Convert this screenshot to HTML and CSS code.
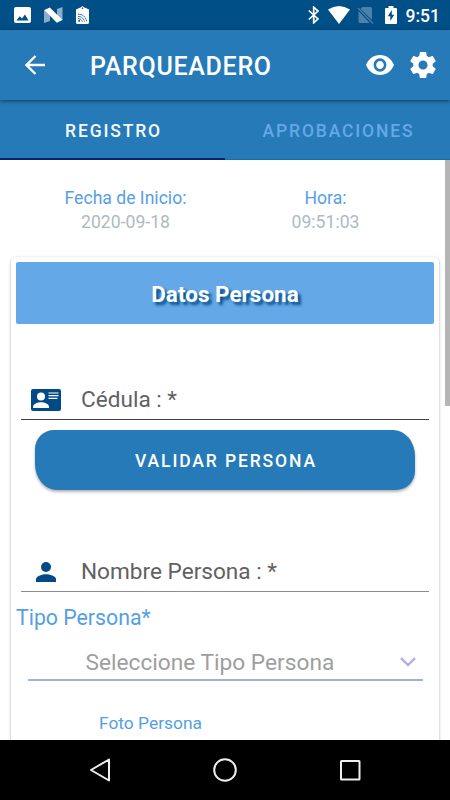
FILE: index.html
```html
<!DOCTYPE html>
<html lang="es">
<head>
<meta charset="utf-8">
<title>Parqueadero</title>
<link rel="stylesheet" href="styles.css">
</head>
<body>
<div class="screen">
  <div class="status">
    <div class="status-left">
      <svg width="17" height="17" viewBox="0 0 17 17"><rect width="17" height="16" rx="2" fill="#fff"/><path d="M2.5 13.5 5.7 9.2 8 11.6 11 7.5 14.5 13.5Z" fill="#004f87"/></svg>
      <svg width="19" height="16" viewBox="0 0 19 16"><path d="M0 3 6 5V14L0 16ZM13 2 18.500 0V13L13 11Z" fill="#fff" opacity=".55"/><path d="M0.300 3 5.800 0.500 18.500 13 12.800 15.700Z" fill="#fff"/></svg>
      <svg width="13" height="18" viewBox="0 0 13 18"><path d="M0 4Q0 3 1 3L5 1.200Q6.500-.8 8 1.200L12 3Q13 3 13 4V16.500Q13 18 11.500 18H1.500Q0 18 0 16.500Z" fill="#fff"/><circle cx="6.500" cy="2.300" r=".8" fill="#004f87"/><g fill="none" stroke="#004f87" stroke-width="1" stroke-dasharray="1.500 .6"><path d="M2 8.200Q9 8 10.700 15.500M2 10.400Q7 10.400 8.500 15.500M2 12.500Q5.400 12.600 6.300 15.500"/></g><circle cx="3.200" cy="14.700" r="1" fill="#004f87"/></svg>
    </div>
    <div class="status-right">
      <svg width="11" height="18" viewBox="0 0 11 18"><path d="M.8 4.500 10 13 5.700 16.800V1.200L10 5 .8 13.500" fill="none" stroke="#fff" stroke-width="1.700"/></svg>
      <svg class="wifi" width="22" height="18" viewBox="0 0 22 18"><path d="M0 3.500Q11-3.500 22 3.500L11 18Z" fill="#fff"/></svg>
      <svg class="sim" width="17" height="18" viewBox="0 0 17 18"><path d="M5.500 1H13.500Q15 1 15 2.500V14L3.500 2.800ZM1.500 5 12.800 17H3Q1.500 17 1.500 15.500Z" fill="#4b81ab"/><path d="M1 2 16 17.500" stroke="#4b81ab" stroke-width="1.200"/></svg>
      <svg class="battery" width="12" height="18" viewBox="0 0 12 18"><path d="M1 2H3.500V0H8.500V2H11Q12 2 12 3V17Q12 18 11 18H1Q0 18 0 17V3Q0 2 1 2Z" fill="#fff"/><path d="M6.800 4 2.800 10.300H5.300V15L9.300 8.700H6.800Z" fill="#004f87"/></svg>
      <span class="clock">9:51</span>
    </div>
  </div>

  <header class="toolbar">
    <svg class="back" width="20" height="20" viewBox="0 0 20 20"><path d="M20 10H1.500M10.500 1 1.500 10 10.500 19" fill="none" stroke="#fff" stroke-width="2.300"/></svg>
    <h1>PARQUEADERO</h1>
    <svg class="eye" width="28" height="20" viewBox="1 4.500 22 15" preserveAspectRatio="none"><path fill="#fff" d="M12 4.500C7 4.500 2.730 7.610 1 12c1.730 4.390 6 7.500 11 7.500s9.270-3.110 11-7.500c-1.730-4.390-6-7.500-11-7.500zM12 17c-2.760 0-5-2.240-5-5s2.240-5 5-5 5 2.240 5 5-2.240 5-5 5zm0-8c-1.660 0-3 1.340-3 3s1.340 3 3 3 3-1.340 3-3-1.340-3-3-3z"/></svg>
    <svg class="gear" width="26" height="26" viewBox="2 2 20 20"><path fill="#fff" d="M19.430 12.980c.04-.32.07-.64.07-.98s-.03-.66-.07-.98l2.110-1.650c.19-.15.24-.42.12-.64l-2-3.460c-.12-.22-.39-.3-.61-.22l-2.490 1c-.52-.4-1.080-.73-1.690-.98l-.38-2.650C14.460 2.180 14.250 2 14 2h-4c-.25 0-.46.18-.49.42l-.38 2.650c-.61.25-1.170.59-1.690.98l-2.490-1c-.23-.09-.49 0-.61.22l-2 3.460c-.13.22-.07.49.12.64l2.110 1.650c-.04.32-.07.65-.07.98s.03.66.07.98l-2.110 1.650c-.19.15-.24.42-.12.64l2 3.460c.12.22.39.3.61.22l2.490-1c.52.4 1.080.73 1.690.98l.38 2.650c.03.24.24.42.49.42h4c.25 0 .46-.18.49-.42l.38-2.650c.61-.25 1.170-.59 1.690-.98l2.490 1c.23.09.49 0 .61-.22l2-3.460c.12-.22.07-.49-.12-.64l-2.110-1.650zM12 15.500c-1.930 0-3.500-1.570-3.500-3.500s1.570-3.500 3.500-3.500 3.500 1.570 3.500 3.500-1.570 3.500-3.500 3.500z"/></svg>
  </header>

  <nav class="tabs">
    <div class="tab active">REGISTRO</div>
    <div class="tab">APROBACIONES</div>
  </nav>

  <main class="content">
    <div class="scrollbar"></div>
    <div class="dates">
      <div><div class="label">Fecha de Inicio:</div><div class="value">2020-09-18</div></div>
      <div><div class="label">Hora:</div><div class="value">09:51:03</div></div>
    </div>
    <section class="card">
      <h2>Datos Persona</h2>
      <div class="field cedula">
        <svg width="30" height="22" viewBox="0 0 30 22"><rect width="30" height="22" rx="2" fill="#004b87"/><circle cx="10" cy="7.500" r="4" fill="#fff"/><path d="M2 19V17.500C2.500 14.700 7 13.300 10 13.300S17.500 14.700 18 17.500V19Z" fill="#fff"/><path d="M17.500 4H27.500M17.500 6.700H27.500M17.500 9.400H26.500" stroke="#fff" stroke-width="1.200"/></svg>
        <span>Cédula : *</span>
      </div>
      <button class="validate">VALIDAR PERSONA</button>
      <div class="field nombre">
        <svg width="20" height="20" viewBox="0 0 20 20"><circle cx="10" cy="5" r="5" fill="#004b87"/><path d="M0 20V17.300C0 14 6.700 12.300 10 12.300S20 14 20 17.300V20Z" fill="#004b87"/></svg>
        <span>Nombre Persona : *</span>
      </div>
      <div class="type-label">Tipo Persona*</div>
      <div class="select"><span>Seleccione Tipo Persona</span><svg width="16" height="10" viewBox="0 0 16 10"><path d="M1 1.200 8 8 15 1.200" fill="none" stroke="#b5aee6" stroke-width="2.400"/></svg></div>
      <div class="photo">Foto Persona</div>
    </section>
  </main>

  <footer class="navbar">
    <svg width="22" height="26" viewBox="0 0 22 26"><path d="M20 2.500V23.500L2 13Z" fill="none" stroke="#eee" stroke-width="2" stroke-linejoin="round"/></svg>
    <svg width="26" height="26" viewBox="0 0 26 26"><circle cx="13" cy="13" r="10.800" fill="none" stroke="#eee" stroke-width="2"/></svg>
    <svg width="22" height="22" viewBox="0 0 22 22"><rect x="2" y="2" width="18.500" height="18.500" rx=".5" fill="none" stroke="#eee" stroke-width="2"/></svg>
  </footer>
</div>
</body>
</html>
```
FILE: styles.css
```css
* { box-sizing: border-box; }
body { margin: 0; font-family: Roboto, "Liberation Sans", sans-serif; background: #fff; }
svg { display: block; flex: none; }
.screen { width: 450px; height: 800px; display: flex; flex-direction: column; overflow: hidden; }
.status { height: 30px; flex: none; background: #004f87; display: flex; align-items: center; justify-content: space-between; padding: 0 11.5px 0 14px; }
.status-left { display: flex; align-items: center; gap: 13px; }
.status-right { display: flex; align-items: center; }
.wifi { margin-left: 9px; }
.sim { margin-left: 7px; }
.battery { margin-left: 11px; }
.clock { width: 33px; margin-left: 8.5px; color: #fff; font-size: 17.5px; font-weight: 500; line-height: 32px; padding-top: 1px; white-space: nowrap; }
.toolbar { height: 70px; flex: none; background: #267ab7; display: flex; align-items: center; padding: 0 14.5px 0 25px; position: relative; box-shadow: 0 1px 4px rgba(0, 0, 0, .55); z-index: 1; }
.toolbar h1 { margin: 3px auto 0 45px; color: #fff; font-size: 25px; font-weight: 500; line-height: 30px; letter-spacing: .7px; }
.gear { margin-left: 15.5px; }
.tabs { height: 60px; flex: none; display: flex; background: #267ab7; border-bottom: 1px solid #0f6fb0; }
.tab { flex: 1; padding-left: 2px; color: #64a8e8; font-size: 17.5px; font-weight: 500; line-height: 62px; letter-spacing: 1.85px; text-align: center; }
.tab.active { color: #f4f9ff; height: 60px; border-bottom: 2px solid #00266f; }
.content { flex: 1; min-height: 0; overflow: hidden; position: relative; padding: 26px 11px 0; }
.scrollbar { position: absolute; right: 0; top: 0; width: 5px; height: 246px; background: #b5b5b5; }
.dates { display: flex; height: 70.5px; padding: 0 14px; text-align: center; font-size: 17.600px; line-height: 24px; }
.dates > div { flex: 1; padding-left: 1px; }
.label { color: #549fe3; }
.value { color: #aebac1; }
.card { height: 600px; border-radius: 5px; padding: 5px; background: #fff; box-shadow: 0 1px 3px rgba(0, 0, 0, .35); }
.card h2 { margin: 0; height: 62px; border-radius: 2px; background: #64a8e8; color: #fff; font-size: 22.500px; font-weight: 700; line-height: 64px; text-align: center; text-shadow: 3px 3px 3px #004b87; }
.field { display: flex; align-items: center; margin: 0 5px; border-bottom: 1px solid #424242; color: #616161; font-size: 22.600px; line-height: 30px; }
.field span { padding-top: 2px; }
.cedula { height: 41px; margin-top: 55.5px; padding-left: 10px; }
.cedula svg { position: relative; top: 1px; }
.cedula span { margin-left: 20px; }
.validate { display: block; width: 380px; height: 60px; margin: 10px 0 0 19px; padding: 2px 0 0 2px; border: 0; border-radius: 19px 22px 19px 22px / 19px 26px 19px 26px; background: #267ab7; color: #fff; font: 500 17.500px/30px Roboto, sans-serif; letter-spacing: 1.87px; box-shadow: 0 2px 3px rgba(0, 0, 0, .3); }
.nombre { height: 42px; margin-top: 60px; padding-left: 15px; border-color: #8b8b8b; }
.nombre svg { position: relative; top: 1px; }
.nombre span { margin-left: 25px; }
.type-label { margin-top: 11px; color: #549fe3; font-size: 21.300px; line-height: 30px; }
.select { display: flex; align-items: center; height: 48px; margin: 0 11px 0 12px; padding: 14px 7px 0 57.5px; border-bottom: 2px solid #9bb3d8; color: #9e9e9e; font-size: 22.700px; line-height: 30px; }
.select svg { margin: 0 0 3px auto; }
.photo { margin: 29.5px 0 0 83px; color: #549fe3; font-size: 17.400px; line-height: 24px; }
.navbar { height: 60px; flex: none; background: #000; display: flex; align-items: center; justify-content: space-between; padding: 0 89px; position: relative; }
```
